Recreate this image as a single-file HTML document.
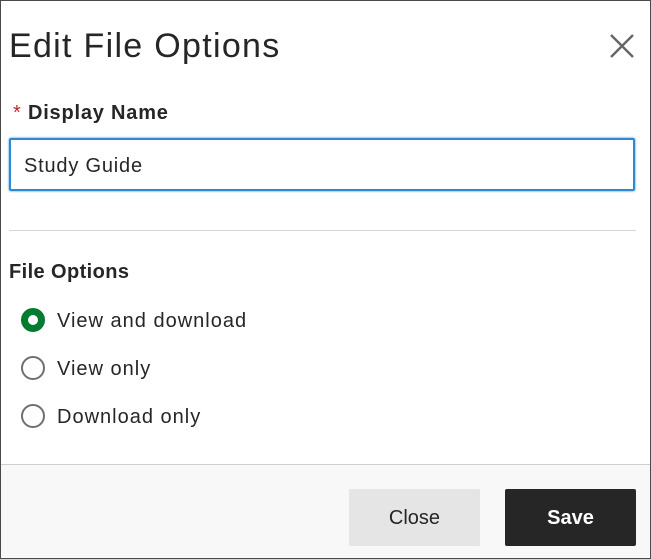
<!DOCTYPE html>
<html><head><style>
*{margin:0;padding:0;box-sizing:border-box}
body{width:651px;height:559px;background:#fff;font-family:"Liberation Sans",sans-serif;color:#262626;position:relative;overflow:hidden}
.frame{position:absolute;left:0;top:0;width:651px;height:559px;border:1px solid #4a4a4a}
.t{position:absolute;white-space:nowrap}
.radio{position:absolute;left:21px;width:24px;height:24px;border-radius:50%;border:2.5px solid #6f6f6f;background:#fff}
.radio.on{border:7px solid #037b30}
.opt{left:57px;font-size:20px;letter-spacing:1px}
</style></head><body>
<div class="t" style="left:9px;top:27px;font-size:34px;letter-spacing:1.3px">Edit File Options</div>
<svg style="position:absolute;left:609px;top:33px" width="26" height="26" viewBox="0 0 26 26"><path d="M2 2L24 24M24 2L2 24" stroke="#666" stroke-width="2.4"/></svg>
<div class="t" style="left:13px;top:102px;font-size:20px;font-weight:bold;letter-spacing:0.8px"><span style="color:#c0282c;font-weight:normal">*</span>&nbsp;Display Name</div>
<div style="position:absolute;left:9px;top:138px;width:626px;height:53px;border:2px solid #2b8ad3;border-radius:2px;box-shadow:0 0 2px #2b8ad3"></div>
<div class="t" style="left:24px;top:155px;font-size:20px;letter-spacing:0.8px">Study Guide</div>
<div style="position:absolute;left:9px;top:230px;width:627px;height:1px;background:#d6d6d6"></div>
<div class="t" style="left:9px;top:261px;font-size:20px;font-weight:bold;letter-spacing:0.4px">File Options</div>
<div class="radio on" style="top:308px"></div>
<div class="t opt" style="top:310px">View and download</div>
<div class="radio" style="top:356px"></div>
<div class="t opt" style="top:358px">View only</div>
<div class="radio" style="top:404px"></div>
<div class="t opt" style="top:406px">Download only</div>
<div style="position:absolute;left:0;top:464px;width:651px;height:95px;background:#f8f8f8;border-top:1px solid #cfcfcf"></div>
<div style="position:absolute;left:349px;top:489px;width:131px;height:57px;background:#e5e5e5;border-radius:2px;font-size:20px;text-align:center;line-height:58px">Close</div>
<div style="position:absolute;left:505px;top:489px;width:131px;height:57px;background:#262626;color:#fff;border-radius:2px;font-size:20px;font-weight:bold;text-align:center;line-height:58px">Save</div>
<div class="frame"></div>
</body></html>
